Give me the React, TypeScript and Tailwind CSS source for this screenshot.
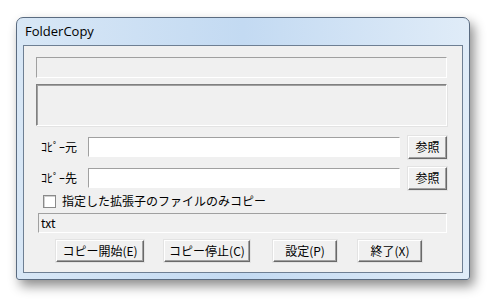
export default function App() {
  const jp = { fontFamily: '"Noto Sans CJK JP", "DejaVu Sans", sans-serif' };
  const btn =
    "flex items-center justify-center bg-[#f0f0f0] border-t border-l border-t-white border-l-white border-r border-b border-r-[#696969] border-b-[#696969] shadow-[inset_-1px_-1px_0_#a0a0a0,0_0_0_1px_#e3e3e3] text-[12px] text-black leading-none";
  const sunken =
    "border-t border-l border-t-[#a0a0a0] border-l-[#a0a0a0] border-r border-b border-r-white border-b-white";

  return (
    <div className="w-[490px] h-[299px] bg-white overflow-hidden pl-[16px] pt-[17px]" style={jp}>
      <div className="w-[454px] h-[263px] rounded-t-[7px] rounded-b-[3px] border border-[#5a6b80] bg-gradient-to-r from-[#d8e7f6] via-[#c3daf2] to-[#e0ecf8] shadow-[4px_6px_12px_rgba(0,0,0,0.45)] flex flex-col px-[6px] pb-[6px]">
        <div className="h-[27px] flex items-center pl-[2px] text-[13px] text-black" style={{ fontFamily: '"Open Sans", "Noto Sans", sans-serif' }}>
          FolderCopy
        </div>
        <div className="flex-1 bg-[#f0f0f0] border border-[#6e7f93] flex flex-col pl-[12px] pr-[15px] pt-[11px]">
          <div className={`h-[21px] ${sunken}`} />
          <div className="h-[42px] mt-[6px] border-t border-l border-t-[#808080] border-l-[#808080] border-r border-b border-r-white border-b-white shadow-[inset_1px_1px_0_#a0a0a0,1px_1px_0_#e3e3e3]" />

          <div className="flex items-center mt-[9px] h-[24px]">
            <span className="w-[52px] pl-[5px] text-[12px]">ｺﾋﾟｰ元</span>
            <div className={`w-[314px] h-[20px] bg-white ${sunken} border-r-[#e3e3e3] border-b-[#e3e3e3]`} />
            <div className={`${btn} ml-[8px] w-[39px] h-[23px]`}>参照</div>
          </div>
          <div className="flex items-center mt-[7px] h-[24px]">
            <span className="w-[52px] pl-[5px] text-[12px]">ｺﾋﾟｰ先</span>
            <div className={`w-[314px] h-[20px] bg-white ${sunken} border-r-[#e3e3e3] border-b-[#e3e3e3]`} />
            <div className={`${btn} ml-[8px] w-[39px] h-[23px]`}>参照</div>
          </div>

          <div className="flex items-center mt-[4px] h-[14px] pl-[7px]">
            <div className="w-[13px] h-[13px] bg-white border border-[#8a8a8a] shadow-[inset_1px_1px_0_#d0d0d0]" />
            <span className="ml-[6px] text-[12px] leading-none">指定した拡張子のファイルのみコピー</span>
          </div>

          <div className={`mt-[5px] ml-[2px] h-[20px] ${sunken} border-r-[#e3e3e3] border-b-[#e3e3e3] flex items-center pl-[2px] text-[12px]`}>
            txt
          </div>

          <div className="flex mt-[7px] pl-[20px]">
            <div className={`${btn} w-[88px] h-[22px]`}>コピー開始(E)</div>
            <div className={`${btn} ml-[20px] w-[86px] h-[22px]`}>コピー停止(C)</div>
            <div className={`${btn} ml-[23px] w-[64px] h-[22px]`}>設定(P)</div>
            <div className={`${btn} ml-[21px] w-[64px] h-[22px]`}>終了(X)</div>
          </div>
        </div>
      </div>
    </div>
  );
}
